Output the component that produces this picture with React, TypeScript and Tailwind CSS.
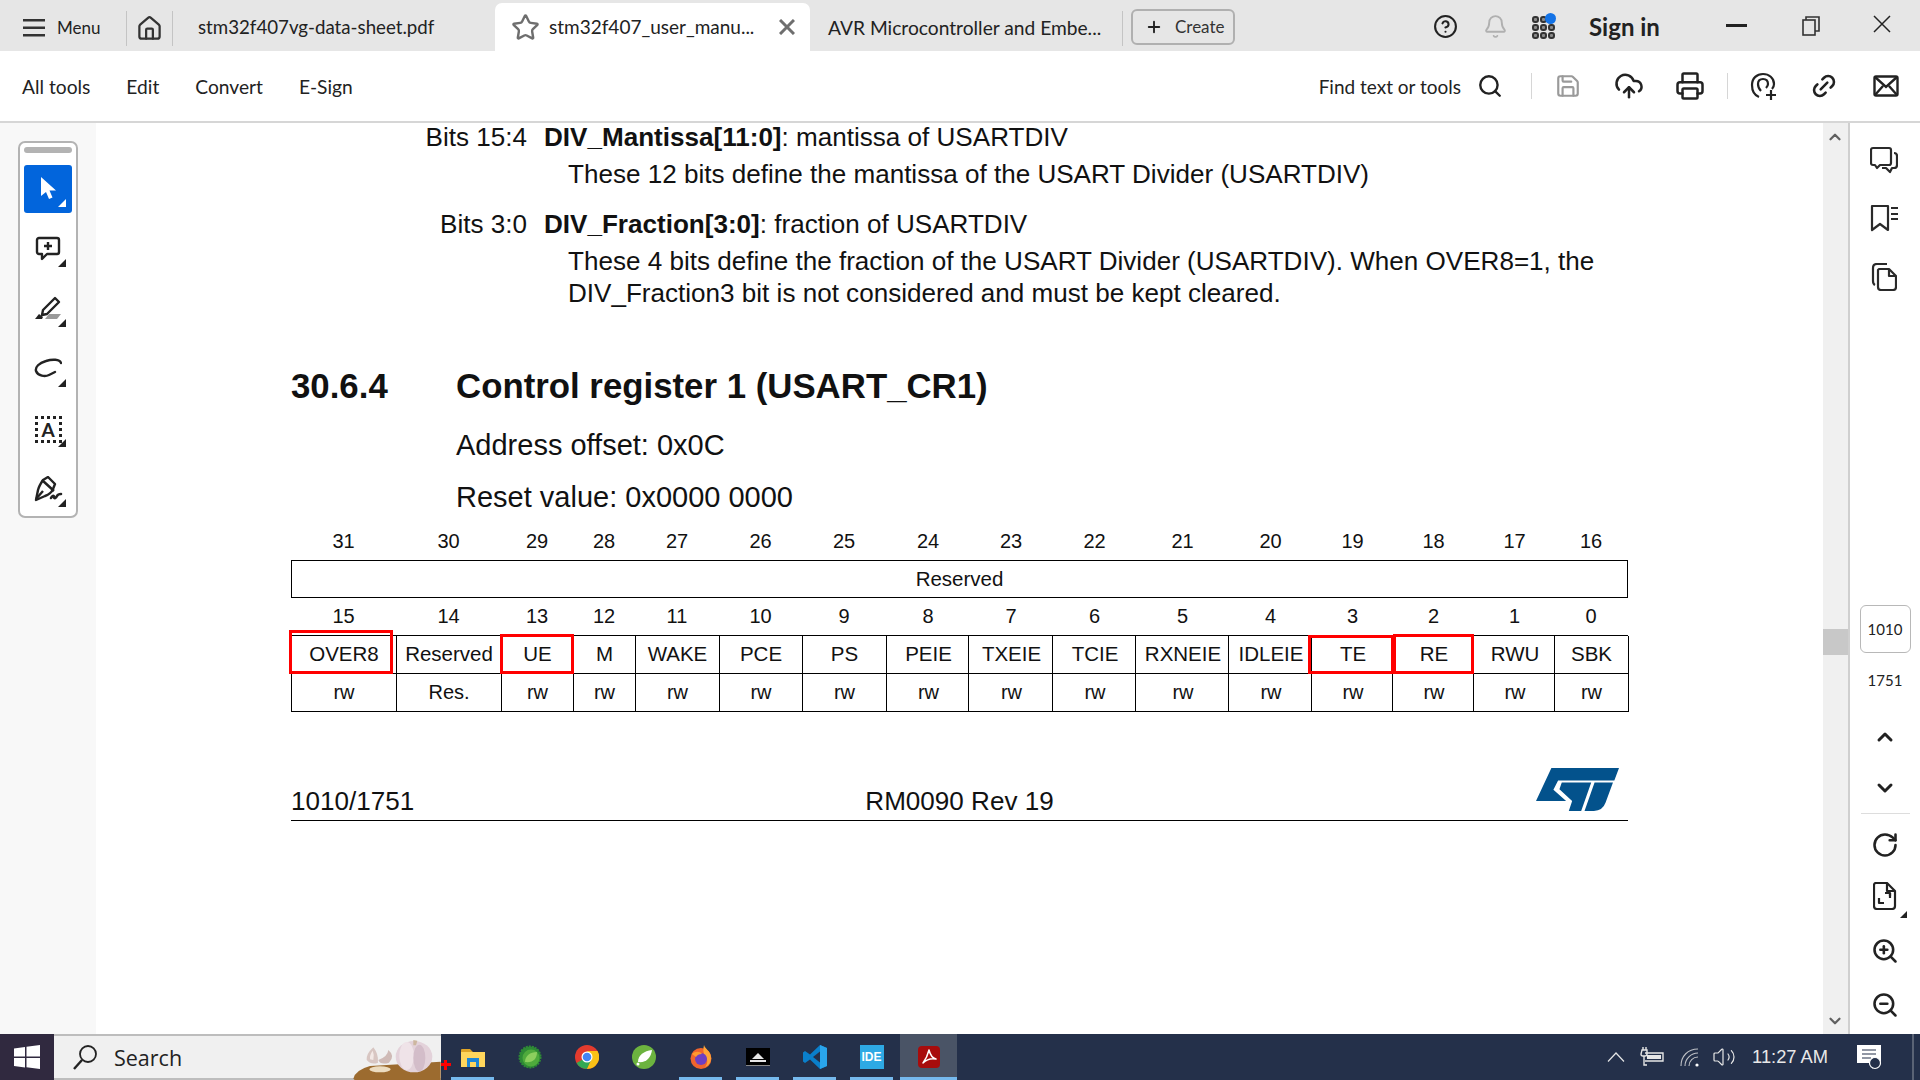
import {
  Bell,
  ChevronDown,
  ChevronUp,
  CircleHelp,
  CloudUpload,
  House,
  Link2,
  Plus,
  Printer,
  RotateCw,
  Save,
  Search,
  Star,
  Volume2,
  ZoomIn,
  ZoomOut,
} from "lucide-react";
import type { ReactNode } from "react";

const uiFont = { fontFamily: '"Lato", "Noto Sans", sans-serif' };

const columns = [
  { top: "31", bottom: "15", name: "OVER8", access: "rw" },
  { top: "30", bottom: "14", name: "Reserved", access: "Res." },
  { top: "29", bottom: "13", name: "UE", access: "rw" },
  { top: "28", bottom: "12", name: "M", access: "rw" },
  { top: "27", bottom: "11", name: "WAKE", access: "rw" },
  { top: "26", bottom: "10", name: "PCE", access: "rw" },
  { top: "25", bottom: "9", name: "PS", access: "rw" },
  { top: "24", bottom: "8", name: "PEIE", access: "rw" },
  { top: "23", bottom: "7", name: "TXEIE", access: "rw" },
  { top: "22", bottom: "6", name: "TCIE", access: "rw" },
  { top: "21", bottom: "5", name: "RXNEIE", access: "rw" },
  { top: "20", bottom: "4", name: "IDLEIE", access: "rw" },
  { top: "19", bottom: "3", name: "TE", access: "rw" },
  { top: "18", bottom: "2", name: "RE", access: "rw" },
  { top: "17", bottom: "1", name: "RWU", access: "rw" },
  { top: "16", bottom: "0", name: "SBK", access: "rw" },
];

const tableCols =
  "grid grid-cols-[105px_105px_72px_62px_84px_83px_84px_82px_84px_83px_93px_83px_81px_81px_81px_74px]";

const redBoxes = [
  "left-[-2px] top-[100px] w-[104px] h-[44px]",
  "left-[209px] top-[104px] w-[74px] h-[40px]",
  "left-[1017px] top-[105px] w-[86px] h-[39px]",
  "left-[1102px] top-[104px] w-[81px] h-[40px]",
];

// the PDF's cell text sits a bit right of centre in the middle columns
const cellShift = (i: number) => (i > 6 && i < 15 ? "pl-[2px]" : "");

const Corner = ({ white = false }: { white?: boolean }) => (
  <div
    className={`absolute right-[6px] bottom-[6px] w-0 h-0 border-l-[8px] border-l-transparent border-b-[8px] ${
      white ? "border-b-white" : "border-b-[#222222]"
    }`}
  />
);

const ToolButton = ({ children, active = false }: { children: ReactNode; active?: boolean }) => (
  <div
    className={`relative w-[48px] h-[48px] rounded-[3px] flex items-center justify-center mb-[12px] ${
      active ? "bg-[#0265dc]" : ""
    }`}
  >
    {children}
    <Corner white={active} />
  </div>
);

const LeftTools = () => (
  <div className="w-[96px] bg-[#f8f8f8] pl-[18px] pt-[18px] shrink-0">
    <div className="w-[60px] h-[377px] bg-white border-2 border-[#b3b3b3] rounded-[7px] pl-[4px] pt-[4px]">
      <div className="w-[48px] h-[6px] rounded-full bg-[#b3b3b3] mb-[12px]" />
      <ToolButton active>
        <svg width="16" height="24" viewBox="0 0 16 24" className="mb-[2px]">
          <path d="M1 1v19l5-4 3 7 3.500-1.500-3-7H16z" fill="#ffffff" />
        </svg>
      </ToolButton>
      <ToolButton>
        <svg width="26" height="26" viewBox="0 0 26 26" fill="none" stroke="#222" strokeWidth="2.400">
          <path d="M4 2h18a2 2 0 0 1 2 2v12a2 2 0 0 1-2 2H12l-5 5v-5H4a2 2 0 0 1-2-2V4a2 2 0 0 1 2-2z" strokeLinejoin="round" />
          <path d="M13 6v8M9 10h8" />
        </svg>
      </ToolButton>
      <ToolButton>
        <svg width="28" height="26" viewBox="0 0 28 26" fill="none" stroke="#222" strokeWidth="2.400" className="mb-[3px]">
          <path d="M9 15 21 3l4 4-12 12-5 1z" strokeLinejoin="round" />
          <path d="M1 24l4-5 4 3-1 2z" fill="#222" stroke="none" />
          <path d="M11 24l4-5h12l-4 5z" fill="#9a9a9a" stroke="none" />
        </svg>
      </ToolButton>
      <ToolButton>
        <svg width="28" height="20" viewBox="0 0 28 20" fill="none" stroke="#222" strokeWidth="2.400" strokeLinecap="round" className="mb-[2px]">
          <path d="M27 5c-1-4-9-4-15-2C5 5 1 9 2 13c2 5 9 6 13 4 2-1 4-2 6-3" />
        </svg>
      </ToolButton>
      <ToolButton>
        <div className="w-[27px] h-[27px] border-[3px] border-dotted border-[#222] flex items-center justify-center text-[19px] font-bold text-[#222] leading-none" style={uiFont}>
          A
        </div>
      </ToolButton>
      <ToolButton>
        <svg width="30" height="26" viewBox="0 0 30 26" fill="none" stroke="#222" strokeWidth="2.400" strokeLinejoin="round">
          <path d="M10 4 15 1l7 7-2 5c-1 3-5 6-8 7l-9 4 2-10c1-4 3-7 5-10z" />
          <path d="M3 23l7-8M9 4l12 11" />
          <path d="M18 22c1-2 3-3 3-1s2 1 3-1 2-2 4-2" strokeLinecap="round" strokeWidth="2.600" />
        </svg>
      </ToolButton>
    </div>
  </div>
);

const PdfPage = () => (
  <div
    className="flex-1 h-full overflow-hidden bg-white pl-[195px] text-[26.07px] text-[#111111]"
    style={{ fontFamily: '"Liberation Sans", Arial, sans-serif' }}
  >
    <div className="w-[1337px]">
      <div className="flex leading-[28px]">
        <span className="w-[236px] text-right">Bits 15:4</span>
        <span className="ml-[17px]">
          <b>DIV_Mantissa[11:0]</b>: mantissa of USARTDIV
        </span>
      </div>
      <p className="ml-[277px] mt-[8px] leading-[30px]">
        These 12 bits define the mantissa of the USART Divider (USARTDIV)
      </p>
      <div className="flex leading-[30px] mt-[20px]">
        <span className="w-[236px] text-right">Bits 3:0</span>
        <span className="ml-[17px]">
          <b>DIV_Fraction[3:0]</b>: fraction of USARTDIV
        </span>
      </div>
      <p className="ml-[277px] mt-[6px] leading-[32px]">
        These 4 bits define the fraction of the USART Divider (USARTDIV). When OVER8=1, the
        <br />
        DIV_Fraction3 bit is not considered and must be kept cleared.
      </p>

      <h2 className="flex font-bold text-[34.8px] leading-[40px] mt-[57px]">
        <span className="w-[165px]">30.6.4</span>
        <span>Control register 1 (USART_CR1)</span>
      </h2>
      <p className="ml-[165px] mt-[24px] text-[29px] leading-[30px]">Address offset: 0x0C</p>
      <p className="ml-[165px] mt-[22px] text-[29px] leading-[30px]">Reset value: 0x0000 0000</p>

      {/* Register table */}
      <div className="relative mt-[18px]">
        <div className={`${tableCols} h-[30px] items-start pt-[1px] text-[20px] leading-[20px] text-center`}>
          {columns.map((c, i) => (
            <span key={c.top} className={cellShift(i)}>
              {c.top}
            </span>
          ))}
        </div>
        <div className="h-[38px] border border-black flex items-center justify-center text-[20.5px]">Reserved</div>
        <div className={`${tableCols} h-[37px] items-center pb-[2px] text-[20px] text-center`}>
          {columns.map((c, i) => (
            <span key={c.bottom} className={cellShift(i)}>
              {c.bottom}
            </span>
          ))}
        </div>
        <div className={`${tableCols} border-t border-l border-black`}>
          {columns.map((c, i) => (
            <div key={c.name} className={`h-[38px] pb-[1px] border-r border-b border-black flex items-center justify-center text-[20.5px] ${cellShift(i)}`}>
              {c.name}
            </div>
          ))}
          {columns.map((c, i) => (
            <div key={c.bottom} className={`h-[38px] pb-[2px] border-r border-b border-black flex items-center justify-center text-[20px] ${cellShift(i)}`}>
              {c.access}
            </div>
          ))}
        </div>
        {redBoxes.map((box) => (
          <div key={box} className={`absolute border-[3px] border-[#ff0000] ${box}`} />
        ))}
      </div>

      {/* Page footer */}
      <div className="mt-[56px] h-[53px] border-b border-black grid grid-cols-3">
        <span className="self-end mb-[4px] leading-[30px]">1010/1751</span>
        <span className="self-end mb-[4px] leading-[30px] text-center">RM0090 Rev 19</span>
        <svg width="83" height="43" viewBox="20 27 248 128" className="justify-self-end mr-[9px]">
          <path
            d="M66 27H268L254 64H86L72 92l38 33H20zM97 70h88l-30 85h-37l10-30-38-35zM195 70h55l-22 60q-9 25-35 25h-28z"
            fill="#03528c"
          />
        </svg>
      </div>
    </div>
  </div>
);

const Scrollbar = () => (
  <div className="w-[27px] shrink-0 h-full bg-[#f0f0f0] border-r-2 border-[#cfcfcf] flex flex-col items-center">
    <ChevronUp size={18} strokeWidth={3} className="text-[#606060] mt-[5px] mr-[1px]" />
    <div className="w-full h-[26px] bg-[#c8c8c8] mt-[483px]" />
    <ChevronDown size={18} strokeWidth={3} className="text-[#606060] mt-auto mb-[4px] mr-[1px]" />
  </div>
);

const RightRail = () => (
  <div className="w-[70px] shrink-0 h-full bg-white flex flex-col items-center text-[#222222]">
    <svg width="28" height="28" viewBox="0 0 28 28" fill="none" stroke="#2a2a2a" strokeWidth="2.200" strokeLinejoin="round" className="mt-[23px] mr-[3px]">
      <path d="M3 2h16a2 2 0 0 1 2 2v13a2 2 0 0 1-2 2h-9l-3 3-2-3H3a2 2 0 0 1-2-2V4a2 2 0 0 1 2-2z" />
      <path d="M24 7c2 0 3 1 3 3v9c0 2-1 3-3 3h-2l-2 4-4-4h-4" />
    </svg>
    <svg width="28" height="28" viewBox="0 0 28 28" fill="none" stroke="#2a2a2a" strokeWidth="2.200" className="mt-[30px] mr-[3px]">
      <path d="M2 2h16v24l-8-6-8 6z" strokeLinejoin="round" />
      <path d="M21 4h7M21 10h7M21 15h7" />
    </svg>
    <svg width="26" height="28" viewBox="0 0 26 28" fill="none" stroke="#2a2a2a" strokeWidth="2.200" strokeLinejoin="round" className="mt-[31px] mr-[3px]">
      <path d="M16 1H6C3 1 2 3 2 5v13c0 2 0 3 2 4" />
      <path d="M8 6h10l7 7v11a3 3 0 0 1-3 3H10a3 3 0 0 1-3-3V7z" />
      <path d="M18 6v7h7" />
    </svg>

    <div className="mt-[314px] w-[51px] h-[48px] border border-[#b8b8b8] rounded-[6px] flex items-center justify-center text-[15px] text-[#222222]" style={uiFont}>
      1010
    </div>
    <div className="mt-[18px] h-[18px] leading-[18px] text-[15px]" style={uiFont}>
      1751
    </div>
    <ChevronUp size={24} strokeWidth={3} className="mt-[36px]" />
    <ChevronDown size={24} strokeWidth={3} className="mt-[27px]" />
    <div className="w-[49px] h-px bg-[#dddddd] mt-[13px]" />
    <RotateCw size={28} strokeWidth={2.200} className="mt-[17px]" />
    <div className="relative w-[36px] h-[30px] mt-[23px] flex justify-center">
      <svg width="24" height="28" viewBox="0 0 24 28" fill="none" stroke="#222" strokeWidth="2.200" strokeLinejoin="round">
        <path d="M3 1h11l8 8v15a3 3 0 0 1-3 3H4a3 3 0 0 1-3-3V3a2 2 0 0 1 2-2z" />
        <path d="M14 1v8h8M6 16v5h5M17 14v-3" />
        <path d="M12 11h5v5" />
      </svg>
      <div className="absolute right-[-4px] bottom-[-6px] w-0 h-0 border-l-[7px] border-l-transparent border-b-[7px] border-b-[#222222]" />
    </div>
    <ZoomIn size={28} strokeWidth={2.200} className="mt-[25px]" />
    <ZoomOut size={28} strokeWidth={2.200} className="mt-[26px]" />
  </div>
);

const TaskSlot = ({ children, line = false, active = false }: { children: ReactNode; line?: boolean; active?: boolean }) => (
  <div className={`w-[57px] h-full flex flex-col items-center ${active ? "bg-[#4a5466]" : ""}`}>
    <div className="h-[43px] pt-[2px] flex items-center justify-center">{children}</div>
    {line && <div className={`h-[3px] bg-[#76b9ed] ${active ? "w-[57px]" : "w-[43px]"}`} />}
  </div>
);

const Taskbar = () => (
  <div className="relative h-[46px] shrink-0 bg-[#24304a] flex items-stretch text-white" style={{ fontFamily: '"Open Sans", sans-serif' }}>
    <div className="w-[54px] bg-[#30293f] flex items-center justify-center">
      <svg width="26" height="24" viewBox="0 0 26 24" fill="#ffffff">
        <path d="M0 3.500 11 2v9.500H0zM12.500 1.800 26 0v11.500H12.500zM0 13h11v9.500L0 21zM12.500 13H26v11l-13.500-1.800z" />
      </svg>
    </div>
    <div className="relative w-[387px] bg-[#f0f0f0] border-y-2 border-[#bdbdbd] flex items-center pl-[18px] pt-[2px] text-[21.5px] text-[#222222]">
      <svg width="26" height="26" viewBox="0 0 26 26" fill="none" stroke="#222" strokeWidth="1.800" className="mb-[3px]">
        <circle cx="16" cy="10" r="8" />
        <path d="M10 16 2 25" strokeWidth="2.400" />
      </svg>
      <span className="ml-[16px]">Search</span>
      <svg width="88" height="46" viewBox="39 0 264 138" className="absolute right-0 top-[-2px]">
        <path d="M40 134q6-26 50-38l212-13v55H44z" fill="#9c6b2f" />
        <path d="M100 40q-22 20-20 38 14 16 34 8 2-26-14-46z" fill="#d8c6c2" />
        <path d="M145 48q-2 20-30 30 6 16 32 8 20-20-2-38z" fill="#cfbab6" />
        <path d="M98 50q-10 14-8 26l10 2q4-14-2-28z" fill="#f3e9e6" />
        <ellipse cx="120" cy="106" rx="32" ry="9" fill="#ecdcc0" />
        <ellipse cx="222" cy="68" rx="55" ry="47" fill="#e3d2da" />
        <ellipse cx="200" cy="66" rx="22" ry="42" fill="#efe3e8" />
        <ellipse cx="238" cy="72" rx="18" ry="40" fill="#d3bdc9" />
        <path d="M220 18l12 2-4 14h-8z" fill="#cdb79f" />
      </svg>
    </div>
    <div className="flex pl-[3px] h-full">
      <TaskSlot line>
        <svg width="24" height="20" viewBox="0 0 24 20">
          <path d="M0 3a1 1 0 0 1 1-1h8l3 3h12v2H0z" fill="#e0a526" />
          <path d="M0 5h24v15H0z" fill="#ffd65c" />
          <path d="M6 20v-9h12v9h-3v-5H9v5z" fill="#1e86d6" />
        </svg>
      </TaskSlot>
      <TaskSlot>
        <svg width="24" height="24" viewBox="0 0 24 24">
          <circle cx="12" cy="12" r="10.500" fill="#2e8b35" strokeDasharray="2 1" stroke="#2e8b35" strokeWidth="2" />
          <circle cx="13" cy="13" r="8.500" fill="#4eaa3c" />
          <path d="M7 17c0-6 5-10 12-10 0 7-4 11-12 10z" fill="#8ccf5e" />
        </svg>
      </TaskSlot>
      <TaskSlot>
        <svg width="24" height="24" viewBox="0 0 24 24">
          <circle cx="12" cy="12" r="12" fill="#e33b2e" />
          <path d="M12 12 1.600 18A12 12 0 0 0 12 24l6-12z" fill="#34a853" />
          <path d="M12 6h10.500a12 12 0 0 1-10.500 18l5-11z" fill="#fbc116" />
          <circle cx="12" cy="12" r="5.500" fill="#ffffff" />
          <circle cx="12" cy="12" r="4.300" fill="#4285f4" />
        </svg>
      </TaskSlot>
      <TaskSlot>
        <svg width="24" height="24" viewBox="0 0 24 24">
          <circle cx="12" cy="12" r="12" fill="#6cb33f" />
          <path d="M6 17c0-7 6-11 14-12-1 8-6 13-14 12z" fill="#ffffff" />
          <circle cx="6" cy="19" r="1.500" fill="#ffffff" />
        </svg>
      </TaskSlot>
      <TaskSlot line>
        <svg width="24" height="24" viewBox="0 0 24 24">
          <circle cx="12" cy="13.500" r="10.500" fill="#f0642d" />
          <path d="M15 0c1 4 7 6 7 13 0 5-3 8-6 9 3-3 3-8 0-11-2-3-2-7-1-11z" fill="#ffa436" />
          <circle cx="12" cy="14" r="6" fill="#6e3fc2" />
          <path d="M3 9c3-3 8-3 10 0-3 0-5 1-6 3z" fill="#ff9a2e" />
        </svg>
      </TaskSlot>
      <TaskSlot line>
        <div className="w-[24px] h-[18px] bg-black border-b border-[#888888] flex items-end justify-center pb-[3px]">
          <div className="flex flex-col items-center">
            <div className="w-0 h-0 border-x-[6px] border-x-transparent border-b-[6px] border-b-[#e6e6e6]" />
            <div className="w-[16px] h-[2px] bg-[#e6e6e6] mt-[1px]" />
          </div>
        </div>
      </TaskSlot>
      <TaskSlot line>
        <svg width="24" height="24" viewBox="0 0 24 24">
          <path d="M17 0 24 3v18l-7 3-10-9.500L2 18l-2-1.500v-9L2 6l5 3.500z" fill="#0a7fcb" />
          <path d="M17 6.500v11L10 12z" fill="#24304a" />
          <path d="M17 0 24 3v18l-7 3z" fill="#2aa5ec" />
        </svg>
      </TaskSlot>
      <TaskSlot line>
        <div className="w-[24px] h-[24px] bg-[#2ea9e4] flex items-center justify-center text-[12px] font-bold text-white" style={{ fontFamily: '"Liberation Sans", sans-serif' }}>
          IDE
        </div>
      </TaskSlot>
      <TaskSlot line active>
        <div className="w-[22px] h-[22px] rounded-[4px] bg-[#a80c0c] flex items-center justify-center">
          <svg width="16" height="16" viewBox="0 0 16 16" fill="none" stroke="#ffffff" strokeWidth="1.500">
            <path d="M8 1c-1 4-3 9-6 13 3-3 8-5 13-4C11 9 9 5 8 1z" strokeLinejoin="round" />
          </svg>
        </div>
      </TaskSlot>
    </div>
    <div className="absolute left-[441px] top-[29px] w-[10px] h-[3px] bg-[#ff0000]" />
    <div className="absolute left-[444px] top-[26px] w-[3px] h-[10px] bg-[#ff0000]" />

    {/* System tray */}
    <div className="ml-auto mr-[6px] flex items-center border-r-[2px] border-[#5a6375]">
      <svg width="18" height="10" viewBox="0 0 18 10" fill="none" stroke="#e6e6e6" strokeWidth="1.200">
        <path d="M1 9.500 9 1l8 8.500" />
      </svg>
      <svg width="25" height="20" viewBox="0 0 25 20" fill="none" stroke="#e6e6e6" strokeWidth="1.400" className="ml-[14px]">
        <path d="M6 6h18v8H6" />
        <rect x="8" y="8" width="14" height="4" fill="#e6e6e6" stroke="none" />
        <path d="M3 3h5v4q0 2-2 2H4q-2 0-2-2zM4 0v3M7 0v3M5 9v9h3" />
      </svg>
      <svg width="20" height="19" viewBox="0 0 20 19" fill="none" stroke="#e6e6e6" strokeWidth="1.100" className="ml-[16px]">
        <path d="M1 18C1 8 8 1 18 1M5 18c0-7 6-13 13-13M9 18c0-5 4-9 9-9" opacity="0.800" />
        <circle cx="17" cy="17" r="1.600" fill="#ffffff" stroke="none" />
      </svg>
      <Volume2 size={24} strokeWidth={1.200} className="ml-[12px] text-[#e6e6e6]" />
      <span className="ml-[16px] text-[18.3px] text-[#e8e8e8] whitespace-nowrap" style={{ fontFamily: '"Liberation Sans", sans-serif' }}>
        11:27 AM
      </span>
      <svg width="25" height="25" viewBox="0 0 25 25" className="ml-[29px] mr-[30px]">
        <path d="M0 0h24v18h-7l-1 6-4-6H0z" fill="#ffffff" />
        <path d="M5 5h14M5 9h14M5 13h9" stroke="#24304a" strokeWidth="1.200" />
        <circle cx="18" cy="18" r="5.500" fill="#24304a" stroke="#ffffff" strokeWidth="1.200" />
      </svg>
    </div>
  </div>
);

export default function App() {
  return (
    <div className="w-[1920px] h-[1080px] overflow-hidden flex flex-col bg-white" style={uiFont}>
      {/* Tab bar */}
      <div className="h-[51px] shrink-0 bg-[#e6e6e6] flex items-center text-[#222222]">
        <div className="w-[127px] h-[35px] mt-[5px] border-r border-[#c4c4c4] flex items-center pl-[23px]">
          <svg width="22" height="18" viewBox="0 0 22 18" fill="#333333">
            <rect width="22" height="2.500" />
            <rect y="7.500" width="22" height="2.500" />
            <rect y="15" width="22" height="2.500" />
          </svg>
          <span className="ml-[12px] text-[17px]">Menu</span>
        </div>
        <div className="w-[46px] h-[35px] mt-[5px] border-r border-[#c4c4c4] flex items-center justify-center">
          <House size={27} strokeWidth={2} className="text-[#333333]" />
        </div>
        <div className="w-[322px] pl-[25px] pt-[4px] text-[18.7px] whitespace-nowrap">stm32f407vg-data-sheet.pdf</div>
        <div className="w-[315px] h-[48px] mt-[3px] bg-white rounded-t-[7px] flex items-center pl-[16px] text-[19px]">
          <Star size={29} strokeWidth={2} className="text-[#6e6e6e]" />
          <span className="ml-[9px] w-[215px] whitespace-nowrap">stm32f407_user_manu...</span>
          <svg width="16" height="16" viewBox="0 0 16 16" stroke="#6e6e6e" strokeWidth="3" className="ml-[15px]">
            <path d="M1 1l14 14M15 1 1 15" />
          </svg>
        </div>
        <div className="w-[313px] h-[35px] mt-[5px] border-r border-[#c4c4c4] flex items-center pl-[18px] text-[19.2px] whitespace-nowrap">
          AVR Microcontroller and Embe...
        </div>
        <div className="ml-[8px] mt-[3px] w-[104px] h-[36px] border-2 border-[#b0b0b0] rounded-[6px] flex items-center pl-[12px] text-[17px] text-[#333333]">
          <Plus size={18} strokeWidth={2.500} className="text-[#222222]" />
          <span className="ml-[12px]">Create</span>
        </div>
        <CircleHelp size={25} strokeWidth={2} className="ml-[198px] mt-[2px] text-[#222222]" />
        <Bell size={25} strokeWidth={1.800} className="ml-[25px] mt-[2px] text-[#b0b0b0]" />
        <div className="relative ml-[24px] mt-[3px] w-[23px] h-[23px] grid grid-cols-3 gap-[1px]">
          {Array.from({ length: 9 }).map((_, i) => (
            <div key={i} className="border-2 border-[#333333] rounded-[3px] bg-[#8a8a8a]" />
          ))}
          <div className="absolute right-[-1px] top-[-3px] w-[11px] h-[11px] rounded-full bg-[#1473e6]" />
        </div>
        <span className="ml-[34px] mt-[2px] w-[71px] text-[24px] font-bold whitespace-nowrap">Sign in</span>
        <div className="ml-[66px] w-[21px] h-[3px] bg-[#222222]" />
        <svg width="18" height="20" viewBox="0 0 18 20" fill="none" stroke="#333" strokeWidth="1.600" className="ml-[55px]">
          <rect x="1" y="4" width="12" height="15" />
          <path d="M4 4V1h13v14h-4" />
        </svg>
        <svg width="18" height="18" viewBox="0 0 18 18" stroke="#222" strokeWidth="1.500" className="ml-[53px] mb-[4px]">
          <path d="M1 1l16 16M17 1 1 17" />
        </svg>
      </div>

      {/* Toolbar */}
      <div className="h-[72px] shrink-0 bg-white border-b-2 border-[#d6d6d6] flex items-center text-[19.2px] text-[#222222]">
        <span className="ml-[22px] mt-[3px]">All tools</span>
        <span className="ml-[36px] mt-[3px]">Edit</span>
        <span className="ml-[36px] mt-[3px]">Convert</span>
        <span className="ml-[36px] mt-[3px]">E-Sign</span>
        <span className="ml-auto mt-[2px] text-[19px]">Find text or tools</span>
        <Search size={26} strokeWidth={2.200} className="ml-[16px] text-[#222222]" />
        <div className="ml-[28px] w-px h-[26px] bg-[#d6d6d6]" />
        <Save size={26} strokeWidth={2} className="ml-[23px] text-[#9a9a9a]" />
        <CloudUpload size={30} strokeWidth={2} className="ml-[33px] text-[#222222]" />
        <Printer size={30} strokeWidth={2} className="ml-[31px] text-[#222222]" />
        <div className="ml-[22px] w-px h-[26px] bg-[#d6d6d6]" />
        <svg width="28" height="28" viewBox="0 0 28 28" fill="none" stroke="#222" strokeWidth="2.200" className="ml-[22px]">
          <path d="M9 25C4 23 2 18 2 13 2 6 7 2 13 2s11 4 11 10c0 2-1 4-2 5" />
          <path d="M11 19c-2-2-3-4-3-7 0-3 2-5 5-5s5 2 5 5c0 2-1 3-2 4" />
          <path d="M21 18v10M16 23h10" />
        </svg>
        <Link2 size={28} strokeWidth={2.200} className="ml-[32px] text-[#222222] -rotate-45" />
        <svg width="26" height="22" viewBox="0 0 26 22" fill="none" stroke="#222" strokeWidth="2.400" className="ml-[35px] mr-[21px]">
          <rect x="1.500" y="1.500" width="23" height="19" rx="1.500" />
          <path d="M2 2l11 10L24 2M2 20l8-9M24 20l-8-9" />
        </svg>
      </div>

      <div className="flex-1 min-h-0 flex">
        <LeftTools />
        <PdfPage />
        <Scrollbar />
        <RightRail />
      </div>

      <Taskbar />
    </div>
  );
}
